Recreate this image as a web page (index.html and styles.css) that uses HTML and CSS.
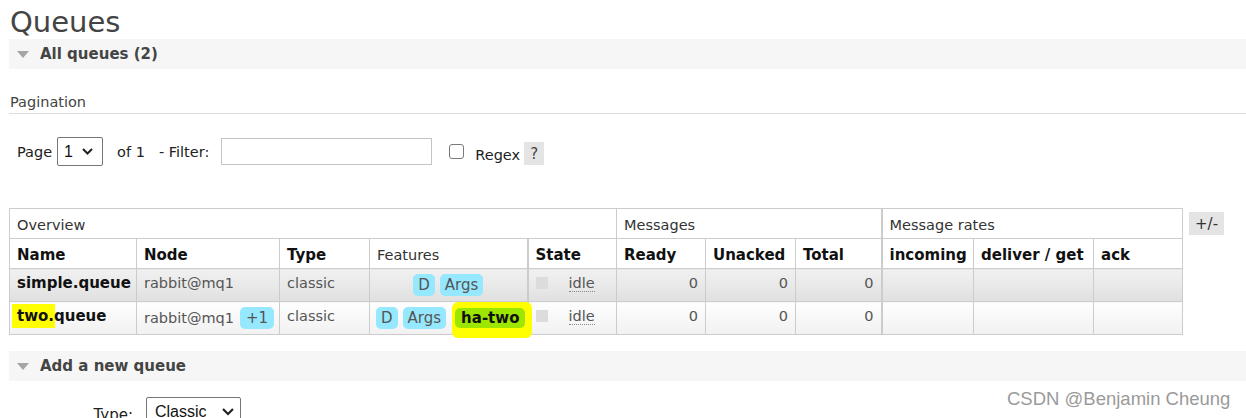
FILE: index.html
```html
<!DOCTYPE html>
<html>
<head>
<meta charset="utf-8">
<title>Queues</title>
<link rel="stylesheet" href="styles.css">
</head>
<body>
<div class="page">
  <h1 class="title">Queues</h1>

  <div class="section-bar">
    <span class="tri"></span>
    <span class="bar-label">All queues (2)</span>
  </div>

  <div class="section-body">
    <h3 class="pag-title">Pagination</h3>

    <div class="pager">
      <span class="lbl-page">Page</span>
      <span class="fake-select sel-page">
        <span class="sel-text">1</span>
        <svg class="chev" width="11" height="7" viewBox="0 0 11 7"><path d="M1 1 L5.5 5.5 L10 1" fill="none" stroke="#222" stroke-width="2"/></svg>
      </span>
      <span class="lbl-of">of 1</span>
      <span class="lbl-filter">- Filter:</span>
      <span class="fake-input"></span>
      <span class="fake-check"></span>
      <span class="lbl-regex">Regex</span>
      <span class="help">?</span>
    </div>

    <div class="table-wrap">
      <table class="queues">
        <colgroup>
          <col class="c-name"><col class="c-node"><col class="c-type"><col class="c-feat"><col class="c-state">
          <col class="c-ready"><col class="c-unacked"><col class="c-total">
          <col class="c-inc"><col class="c-deliver"><col class="c-ack">
        </colgroup>
        <thead>
          <tr class="grp">
            <th colspan="5">Overview</th>
            <th colspan="3" class="sep">Messages</th>
            <th colspan="3" class="sep2">Message rates</th>
          </tr>
          <tr class="hdr">
            <th>Name</th>
            <th>Node</th>
            <th>Type</th>
            <th class="light">Features</th>
            <th class="sep-l">State</th>
            <th class="sep">Ready</th>
            <th>Unacked</th>
            <th>Total</th>
            <th class="sep2">incoming</th>
            <th>deliver / get</th>
            <th>ack</th>
          </tr>
        </thead>
        <tbody>
          <tr class="alt1">
            <td class="qname">simple.queue</td>
            <td class="muted">rabbit@mq1</td>
            <td class="muted">classic</td>
            <td class="feat"><span class="badge">D</span><span class="badge">Args</span></td>
            <td class="state sep-l"><span class="sq"></span><span class="idle">idle</span></td>
            <td class="num sep">0</td>
            <td class="num">0</td>
            <td class="num">0</td>
            <td class="sep2"></td>
            <td></td>
            <td></td>
          </tr>
          <tr class="alt2">
            <td class="qname"><span class="hl">two.</span>queue</td>
            <td class="muted">rabbit@mq1<span class="badge plus">+1</span></td>
            <td class="muted">classic</td>
            <td class="feat feat2"><span class="badge">D</span><span class="badge">Args</span><span class="hl-wrap"><span class="badge policy">ha-two</span></span></td>
            <td class="state sep-l"><span class="sq"></span><span class="idle">idle</span></td>
            <td class="num sep">0</td>
            <td class="num">0</td>
            <td class="num">0</td>
            <td class="sep2"></td>
            <td></td>
            <td></td>
          </tr>
        </tbody>
      </table>
      <span class="plusminus">+/-</span>
    </div>
  </div>

  <div class="section-bar add-bar">
    <span class="tri"></span>
    <span class="bar-label">Add a new queue</span>
  </div>

  <div class="form-row">
    <label class="form-label">Type:</label>
    <span class="fake-select sel-type">
      <span class="sel-text">Classic</span>
      <svg class="chev" width="12" height="8" viewBox="0 0 12 8"><path d="M1 1 L6 6 L11 1" fill="none" stroke="#222" stroke-width="2.2"/></svg>
    </span>
  </div>
</div>

<div class="watermark">CSDN @Benjamin Cheung</div>
</body>
</html>
```

FILE: styles.css
```css
* { box-sizing: border-box; }

html, body {
  margin: 0;
  padding: 0;
}

body {
  width: 1246px;
  height: 418px;
  overflow: hidden;
  position: relative;
  background: #fff;
  color: #484848;
  font-family: "DejaVu Sans", Verdana, sans-serif;
  font-size: 14.5px;
}

.title {
  margin: 0 0 0 10px;
  padding-top: 5px;
  height: 39px;
  font-size: 29px;
  line-height: 34px;
  font-weight: normal;
  color: #444;
}

.section-bar {
  margin-left: 9px;
  height: 30px;
  background: #f6f6f6;
  display: flex;
  align-items: center;
  padding-left: 8px;
}

.tri {
  width: 0;
  height: 0;
  border-left: 6.5px solid transparent;
  border-right: 6.5px solid transparent;
  border-top: 7px solid #a5a5a5;
  margin-top: 1px;
}

.bar-label {
  margin-left: 11px;
  font-weight: bold;
  font-size: 15px;
  color: #444;
}

.section-body {
  padding-left: 9px;
}

.pag-title {
  margin: 24px 0 0;
  padding: 0 0 2px 1px;
  font-size: 14.5px;
  line-height: 18px;
  font-weight: normal;
  color: #444;
  border-bottom: 1px solid #ddd;
}

.pager {
  margin-top: 23px;
  height: 29px;
  display: flex;
  align-items: center;
  padding-left: 8px;
  color: #222;
}

.fake-select {
  display: inline-flex;
  align-items: center;
  justify-content: space-between;
  border: 1px solid #767676;
  border-radius: 2px;
  background: #fff;
  font-family: "Liberation Sans", Arial, sans-serif;
  color: #111;
}

.sel-page {
  margin-left: 5px;
  width: 46px;
  height: 29px;
  padding: 0 9px 0 6px;
  font-size: 16px;
}

.lbl-of { margin-left: 14px; }
.lbl-filter { margin-left: 14px; }

.fake-input {
  margin-left: 12px;
  width: 211px;
  height: 27px;
  border: 1px solid #c4c4c4;
  background: #fff;
}

.fake-check {
  margin-left: 17px;
  width: 15px;
  height: 15px;
  border: 1px solid #7a7a7a;
  border-radius: 3px;
  margin-top: -1px;
}

.lbl-regex {
  margin-left: 11px;
  margin-top: 7px;
}

.help {
  margin-left: 4px;
  margin-top: 4px;
  width: 20px;
  height: 23px;
  background: #e4e4e4;
  color: #444;
  font-size: 15px;
  display: flex;
  align-items: center;
  justify-content: center;
}

.table-wrap {
  margin-top: 42px;
  display: flex;
  align-items: flex-start;
}

.queues {
  border-collapse: collapse;
  table-layout: fixed;
  width: 1174px;
  color: #222;
}

.c-name { width: 127px; }
.c-node { width: 143px; }
.c-type { width: 90px; }
.c-feat { width: 158px; }
.c-state { width: 89px; }
.c-ready { width: 89px; }
.c-unacked { width: 90px; }
.c-total { width: 86px; }
.c-inc { width: 92px; }
.c-deliver { width: 120px; }
.c-ack { width: 89px; }

.queues th,
.queues td {
  border: 1px solid #ccc;
  padding: 0 7px;
  text-align: left;
  white-space: nowrap;
  overflow: visible;
}

.queues .sep-l { border-left: 2px solid #ccc; }
.queues .sep2 { border-left: 2px solid #ccc; }

.grp th {
  height: 30px;
  font-weight: normal;
  font-size: 14.5px;
  color: #333;
  padding-top: 2px;
}

.hdr th {
  height: 30px;
  font-weight: bold;
  font-size: 15px;
  color: #111;
  padding-top: 2px;
}

.hdr th.light {
  font-weight: normal;
  font-size: 14.5px;
  color: #333;
}

.queues td {
  height: 33px;
  vertical-align: top;
  padding-top: 5px;
  line-height: 18px;
}

.alt1 td { background: linear-gradient(#f1f1f1, #e0e0e0); }
.alt2 td { background: linear-gradient(#fefefe, #f1f1f1); }

.qname {
  font-weight: bold;
  font-size: 15px;
  color: #111;
}

.hl {
  background: #ffff00;
  padding: 3px 1px 3px 5px;
  margin-left: -5px;
  margin-right: -1px;
}

.muted { color: #555; }

.feat { text-align: center !important; color: #555; }
.feat2 { padding-left: 6px !important; padding-right: 0 !important; text-align: left !important; }

.badge {
  display: inline-block;
  background: #95e8fd;
  color: #555;
  border-radius: 5px;
  padding: 2px 5px;
  font-size: 15px;
  line-height: 18px;
  margin-right: 5px;
}

.badge:last-child { margin-right: 0; }

.plus {
  margin-left: 6px;
  padding: 2px 6px;
}

.hl-wrap {
  display: inline-block;
  background: #ffff00;
  border-radius: 6px;
  padding: 6px 7px 10px 3px;
  margin: -6px 0 -10px 1px;
  vertical-align: baseline;
}

.policy {
  background: #9ce600;
  color: #111;
  font-weight: bold;
  font-size: 15px;
  padding: 1px 6px;
  margin-right: 0;
}

.state { color: #555; }

.sq {
  display: inline-block;
  width: 12px;
  height: 12px;
  background: #dcdcdc;
  margin-top: 3px;
  vertical-align: top;
}

.idle {
  margin-left: 21px;
  border-bottom: 1px dotted #888;
}

.num {
  text-align: right !important;
  color: #555;
}

.plusminus {
  margin-left: 6px;
  margin-top: 4px;
  width: 35px;
  height: 23px;
  background: #e4e4e4;
  color: #333;
  font-size: 15px;
  display: flex;
  align-items: center;
  justify-content: center;
}

.add-bar {
  margin-top: 16px;
}

.form-row {
  margin-top: 16px;
  display: flex;
  align-items: flex-start;
}

.form-label {
  width: 133px;
  text-align: right;
  padding-top: 9px;
  color: #222;
  font-size: 15px;
}

.sel-type {
  margin-left: 13px;
  width: 95px;
  height: 30px;
  padding: 0 6px 0 8px;
  font-size: 16px;
}

.watermark {
  position: absolute;
  left: 1007px;
  top: 388px;
  font-family: "Liberation Sans", Arial, sans-serif;
  font-size: 18.5px;
  color: #9a9a9a;
  text-shadow: 0 0 2px #fff, 0 0 1px #fff;
  white-space: nowrap;
}
```
